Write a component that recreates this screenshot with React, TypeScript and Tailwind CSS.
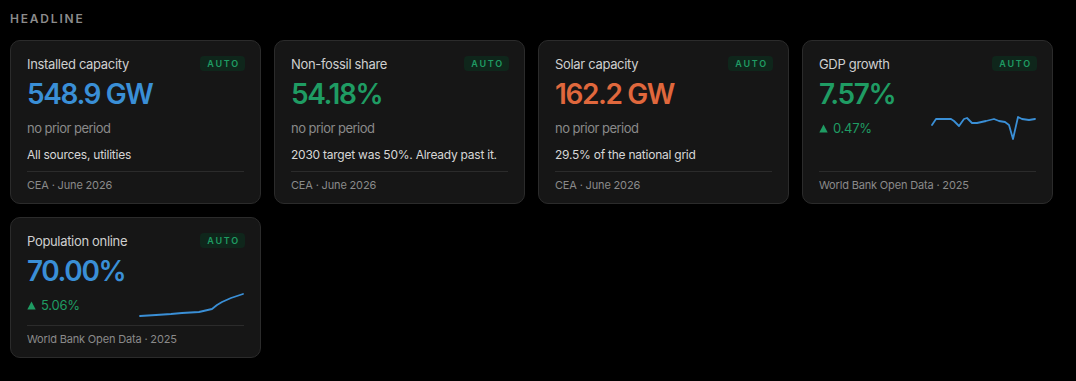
import React from "react"

type Card = {
  title: string
  value: string
  color: string
  sub?: string
  note?: string
  delta?: string
  spark?: string
  source: string
}

const cards: Card[] = [
  {
    title: "Installed capacity",
    value: "548.9 GW",
    color: "text-[#3a8fd6]",
    sub: "no prior period",
    note: "All sources, utilities",
    source: "CEA · June 2026",
  },
  {
    title: "Non-fossil share",
    value: "54.18%",
    color: "text-[#1f9c63]",
    sub: "no prior period",
    note: "2030 target was 50%. Already past it.",
    source: "CEA · June 2026",
  },
  {
    title: "Solar capacity",
    value: "162.2 GW",
    color: "text-[#e0683d]",
    sub: "no prior period",
    note: "29.5% of the national grid",
    source: "CEA · June 2026",
  },
  {
    title: "GDP growth",
    value: "7.57%",
    color: "text-[#1f9c63]",
    delta: "0.47%",
    spark:
      "1,9 5,3 20,3 23,5 28,10 33,3 36,2 41,7 46,7 55,5 63,3 68,5 74,6 78,9 82,23 87,1 91,3 98,4 104,3",
    source: "World Bank Open Data · 2025",
  },
  {
    title: "Population online",
    value: "70.00%",
    color: "text-[#3a8fd6]",
    delta: "5.06%",
    spark: "1,23 17,22 32,21 43,20 60,19 73,16 78,12 83,9 92,5 104,1",
    source: "World Bank Open Data · 2025",
  },
]

function Sparkline({ points }: { points: string }) {
  return (
    <svg width="105" height="24" viewBox="0 0 105 24" className="shrink-0">
      <polyline
        points={points}
        fill="none"
        stroke="#3a8fd6"
        strokeWidth="1.8"
        strokeLinejoin="round"
        strokeLinecap="round"
      />
    </svg>
  )
}

function MetricCard({ card }: { card: Card }) {
  return (
    <div className="flex flex-col rounded-[10px] border border-[#2b2b2b] bg-[#161616] px-4 pt-[15px] pb-[10px]">
      {/* header */}
      <div className="flex h-[15px] items-center justify-between">
        <span className="text-[13px] leading-[20px] tracking-[-0.025em] text-[#cfcfcf]">{card.title}</span>
        <span className="-mr-px flex h-[15px] items-center rounded-[4px] bg-[#0f261b] pr-[5px] pl-[7px] text-[9px] font-semibold tracking-[0.2em] text-[#1f9c63]">
          AUTO
        </span>
      </div>

      <div className={`mt-[6px] text-[28px] leading-[34px] font-semibold tracking-[-0.05em] ${card.color}`}>
        {card.value}
      </div>

      {card.sub && (
        <div className="mt-[7px] text-[13px] leading-[20px] tracking-[-0.04em] text-[#8a8a8a]">{card.sub}</div>
      )}
      {card.note && (
        <div className="mt-[9px] text-[12px] leading-[16px] tracking-[-0.02em] text-[#d6d6d6]">{card.note}</div>
      )}

      {card.delta && (
        <div className="mt-[5px] flex h-[24px] items-center justify-between">
          <span className="flex items-center gap-[5px] text-[13px] leading-[20px] tracking-[-0.02em] text-[#1f9c63]">
            <svg width="9" height="9" viewBox="0 0 9 9">
              <path d="M4.5 0.5 L8.7 8.5 L0.3 8.5 Z" fill="#1f9c63" />
            </svg>
            {card.delta}
          </span>
          {card.spark && <Sparkline points={card.spark} />}
        </div>
      )}

      <div className="mt-auto pt-[8px]">
        <div className="border-t border-[#2b2b2b] pt-[5px] text-[11px] leading-[16px] tracking-[-0.015em] text-[#8a8a8a]">
          {card.source}
        </div>
      </div>
    </div>
  )
}

export default function App() {
  return (
    <div
      className="min-h-[381px] w-full bg-black px-[10px] pt-[11px]"
      style={{ fontFamily: "Inter, 'Noto Sans', sans-serif" }}
    >
      <h2 className="mb-[13px] text-[12px] leading-[16px] font-semibold tracking-[0.15em] text-[#8c8c8c]">
        HEADLINE
      </h2>
      <div className="grid w-[1043px] grid-cols-4 gap-[13px]">
        {cards.map((c) => (
          <MetricCard key={c.title} card={c} />
        ))}
      </div>
    </div>
  )
}
